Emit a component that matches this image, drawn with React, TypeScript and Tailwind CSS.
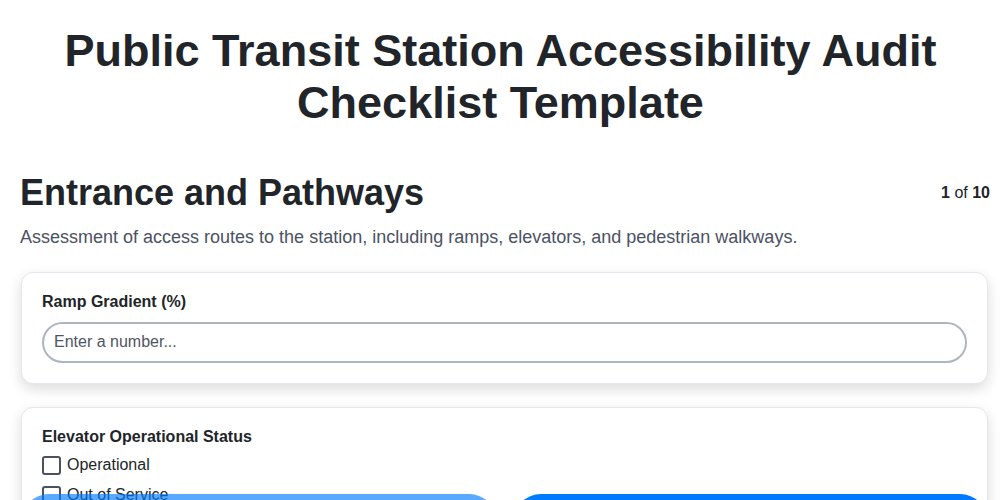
import { useState } from 'react';

const OPTIONS = ['Operational', 'Out of Service', 'Under Maintenance'];

export default function App() {
  const [checked, setChecked] = useState<string[]>([]);

  const toggle = (opt: string) =>
    setChecked((prev) => (prev.includes(opt) ? prev.filter((o) => o !== opt) : [...prev, opt]));

  return (
    <div className="min-h-screen bg-white font-['Liberation_Sans',Arial,sans-serif] text-[#212529]">
      <div className="pl-5 pr-[10px] pt-[25px] pb-24">
        <h1 className="mr-[9px] text-center text-[45px] leading-[1.145] font-bold px-10">
          Public Transit Station Accessibility Audit Checklist Template
        </h1>

        <div className="mt-[43px] flex items-center justify-between">
          <h2 className="text-4xl leading-[1.2] font-bold">Entrance and Pathways</h2>
          <div className="text-base">
            <span className="font-bold">1</span> of <span className="font-bold">10</span>
          </div>
        </div>
        <p className="mt-2.5 text-lg leading-[1.5] text-[#4a5263]">
          Assessment of access routes to the station, including ramps, elevators, and pedestrian walkways.
        </p>

        <div className="mt-[21px] ml-px mr-[2px] rounded-xl border border-[#e6e6ee] bg-white p-5 shadow-[0_5px_14px_rgba(0,0,0,0.14)]">
          <label className="block text-base leading-[1.15] font-bold">Ramp Gradient (%)</label>
          <input
            type="number"
            placeholder="Enter a number..."
            className="mt-2.5 block h-[41px] w-full rounded-full border-2 border-[#adb5bd] px-2.5 text-base text-[#212529] outline-none placeholder:text-[#4f5563]"
          />
        </div>

        <div className="mt-[23px] ml-px mr-[2px] rounded-xl border border-[#e6e6ee] bg-white p-5 shadow-[0_5px_14px_rgba(0,0,0,0.14)]">
          <div className="text-base leading-[1.15] font-bold">Elevator Operational Status</div>
          <div className="mt-2 flex flex-col gap-2">
            {OPTIONS.map((opt) => (
              <label key={opt} className="flex h-[22px] items-center gap-1.5 text-base cursor-pointer">
                <span
                  onClick={() => toggle(opt)}
                  className={`h-[19px] w-[19px] rounded-[3px] border-2 border-[#4b5160] ${
                    checked.includes(opt) ? 'bg-[#007bff]' : 'bg-white'
                  }`}
                />
                {opt}
              </label>
            ))}
          </div>
        </div>
      </div>

      <div className="fixed left-0 right-0 top-[494px] pl-[21px] pr-[12px]">
        <div className="grid grid-cols-2 gap-4">
          <button disabled className="h-14 rounded-full bg-[#007bff] opacity-65 text-white text-base font-bold">
            Previous
          </button>
          <button className="h-14 rounded-full bg-[#007bff] text-white text-base font-bold">Next</button>
        </div>
      </div>
    </div>
  );
}
